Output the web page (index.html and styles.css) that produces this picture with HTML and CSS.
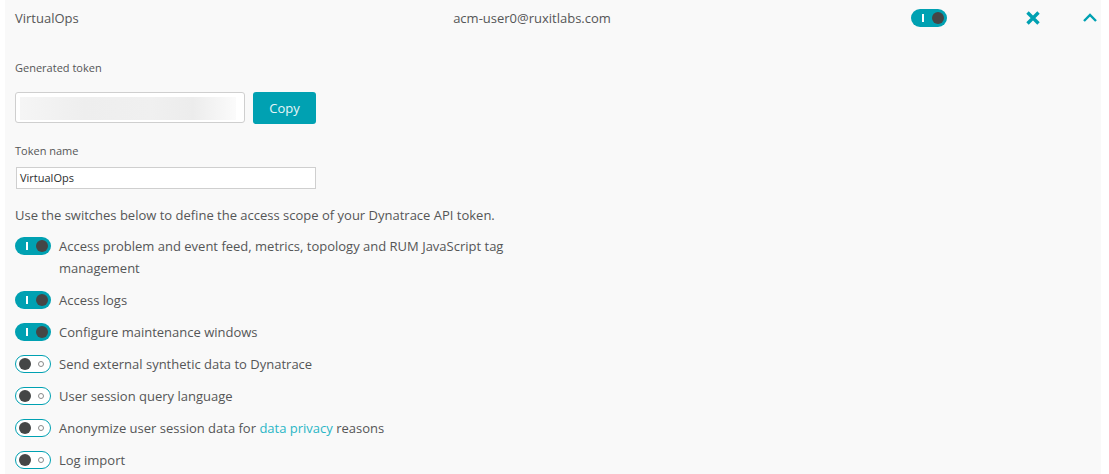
FILE: index.html
```html
<!DOCTYPE html>
<html>
<head>
<meta charset="utf-8">
<link rel="stylesheet" href="styles.css">
</head>
<body>
<div class="panel">
  <div class="header">
    <div class="h-name">VirtualOps</div>
    <div class="h-user">acm-user0@ruxitlabs.com</div>
    <div class="h-toggle"><span class="toggle on"><span class="bar"></span><span class="knob"></span></span></div>
    <div class="h-close">
      <svg width="16" height="16" viewBox="0 0 16 16"><path d="M2.5 2.5 L13.5 13.5 M13.5 2.5 L2.5 13.5" stroke="#00a1b2" stroke-width="3.4" stroke-linecap="butt"/></svg>
    </div>
    <div class="h-chev">
      <svg width="16" height="12" viewBox="0 0 16 12"><path d="M2 9 L8 3 L14 9" fill="none" stroke="#00a1b2" stroke-width="2.4"/></svg>
    </div>
  </div>
  <div class="body">
    <div class="label first">Generated token</div>
    <div class="token-row">
      <div class="token-input"><div class="blur"></div></div>
      <button class="copy">Copy</button>
    </div>
    <div class="label second">Token name</div>
    <div class="name-input">VirtualOps</div>
    <p class="desc">Use the switches below to define the access scope of your Dynatrace API token.</p>
    <ul class="scopes">
      <li><span class="toggle on"><span class="bar"></span><span class="knob"></span></span><span class="txt">Access problem and event feed, metrics, topology and RUM JavaScript tag<br>management</span></li>
      <li><span class="toggle on"><span class="bar"></span><span class="knob"></span></span><span class="txt">Access logs</span></li>
      <li><span class="toggle on"><span class="bar"></span><span class="knob"></span></span><span class="txt">Configure maintenance windows</span></li>
      <li><span class="toggle off"><span class="knob"></span><span class="ring"></span></span><span class="txt">Send external synthetic data to Dynatrace</span></li>
      <li><span class="toggle off"><span class="knob"></span><span class="ring"></span></span><span class="txt">User session query language</span></li>
      <li><span class="toggle off"><span class="knob"></span><span class="ring"></span></span><span class="txt">Anonymize user session data for <a class="link">data privacy</a> reasons</span></li>
      <li><span class="toggle off"><span class="knob"></span><span class="ring"></span></span><span class="txt">Log import</span></li>
    </ul>
  </div>
</div>
</body>
</html>
```
FILE: styles.css
```css
html, body {
  margin: 0;
  padding: 0;
  background: #ffffff;
}
body {
  font-family: "Open Sans", "Noto Sans", sans-serif;
  color: #555657;
  height: 474px;
  overflow: hidden;
}
.panel {
  margin: 0 8px 0 5px;
  background: #f9f9f9;
  height: 474px;
}
.header {
  display: flex;
  align-items: center;
  height: 36px;
  padding: 0 0 0 10px;
  font-size: 13px;
}
.h-name {
  width: 290px;
}
.h-user {
  width: 454px;
  text-align: center;
}
.h-toggle {
  width: 266px;
  padding-left: 152px;
  box-sizing: border-box;
  display: flex;
}
.h-close {
  width: 57px;
  display: flex;
}
.h-chev {
  display: flex;
}
.body {
  padding: 0 10px;
}
.label {
  font-size: 11px;
  line-height: 16px;
}
.label.first {
  margin-top: 24px;
}
.token-row {
  display: flex;
  gap: 8px;
  margin-top: 16px;
}
.token-input {
  border: 1px solid #cfcfcf;
  border-radius: 3px;
  background: #ffffff;
  padding: 4px 3px 0 4px;
  box-sizing: border-box;
  height: 31px;
  width: 230px;
}
.blur {
  height: 23px;
  width: 216px;
  background: linear-gradient(90deg, #f5f5f5 0%, #eeeeee 30%, #f0f0f0 60%, #ececec 80%, #fbfbfb 100%);
  filter: blur(0.6px);
}
.copy {
  width: 63px;
  height: 32px;
  border: none;
  border-radius: 3px;
  background: #00a1b2;
  color: #e6f6f8;
  font-family: inherit;
  font-size: 13px;
  padding: 0;
}
.label.second {
  margin-top: 19px;
}
.name-input {
  margin-top: 8px;
  width: 300px;
  height: 22px;
  box-sizing: border-box;
  border: 1px solid #cfcfcf;
  background: #ffffff;
  font-size: 11px;
  line-height: 20px;
  padding-left: 3px;
  color: #2c2d2d;
  margin-left: 1px;
}
.desc {
  margin: 15px 0 0;
  font-size: 13px;
  line-height: 22px;
}
.scopes {
  list-style: none;
  margin: 9px 0 0;
  padding: 0;
  display: flex;
  flex-direction: column;
  gap: 10px;
}
.scopes li {
  display: flex;
  align-items: flex-start;
  gap: 8px;
  font-size: 13px;
  line-height: 22px;
}
.scopes li .toggle {
  margin-top: 2px;
}
.toggle {
  flex: none;
  position: relative;
  display: inline-block;
  width: 36px;
  height: 18px;
  border-radius: 9px;
  box-sizing: border-box;
}
.toggle.on {
  background: #00a1b2;
}
.toggle.off {
  background: #ffffff;
  border: 1.5px solid #00a1b2;
}
.toggle .bar {
  position: absolute;
  left: 11px;
  top: 5px;
  width: 1.5px;
  height: 8px;
  background: #ffffff;
}
.toggle.on .knob {
  position: absolute;
  right: 3px;
  top: 3px;
  width: 12px;
  height: 12px;
  border-radius: 50%;
  background: #454646;
}
.toggle.off .knob {
  position: absolute;
  left: 3px;
  top: 1.5px;
  width: 12px;
  height: 12px;
  border-radius: 50%;
  background: #454646;
}
.toggle .ring {
  position: absolute;
  right: 6px;
  top: 4.5px;
  width: 6px;
  height: 6px;
  box-sizing: border-box;
  border-radius: 50%;
  border: 1.5px solid #8a8a8a;
}
.link {
  color: #2ab6c6;
}
```
